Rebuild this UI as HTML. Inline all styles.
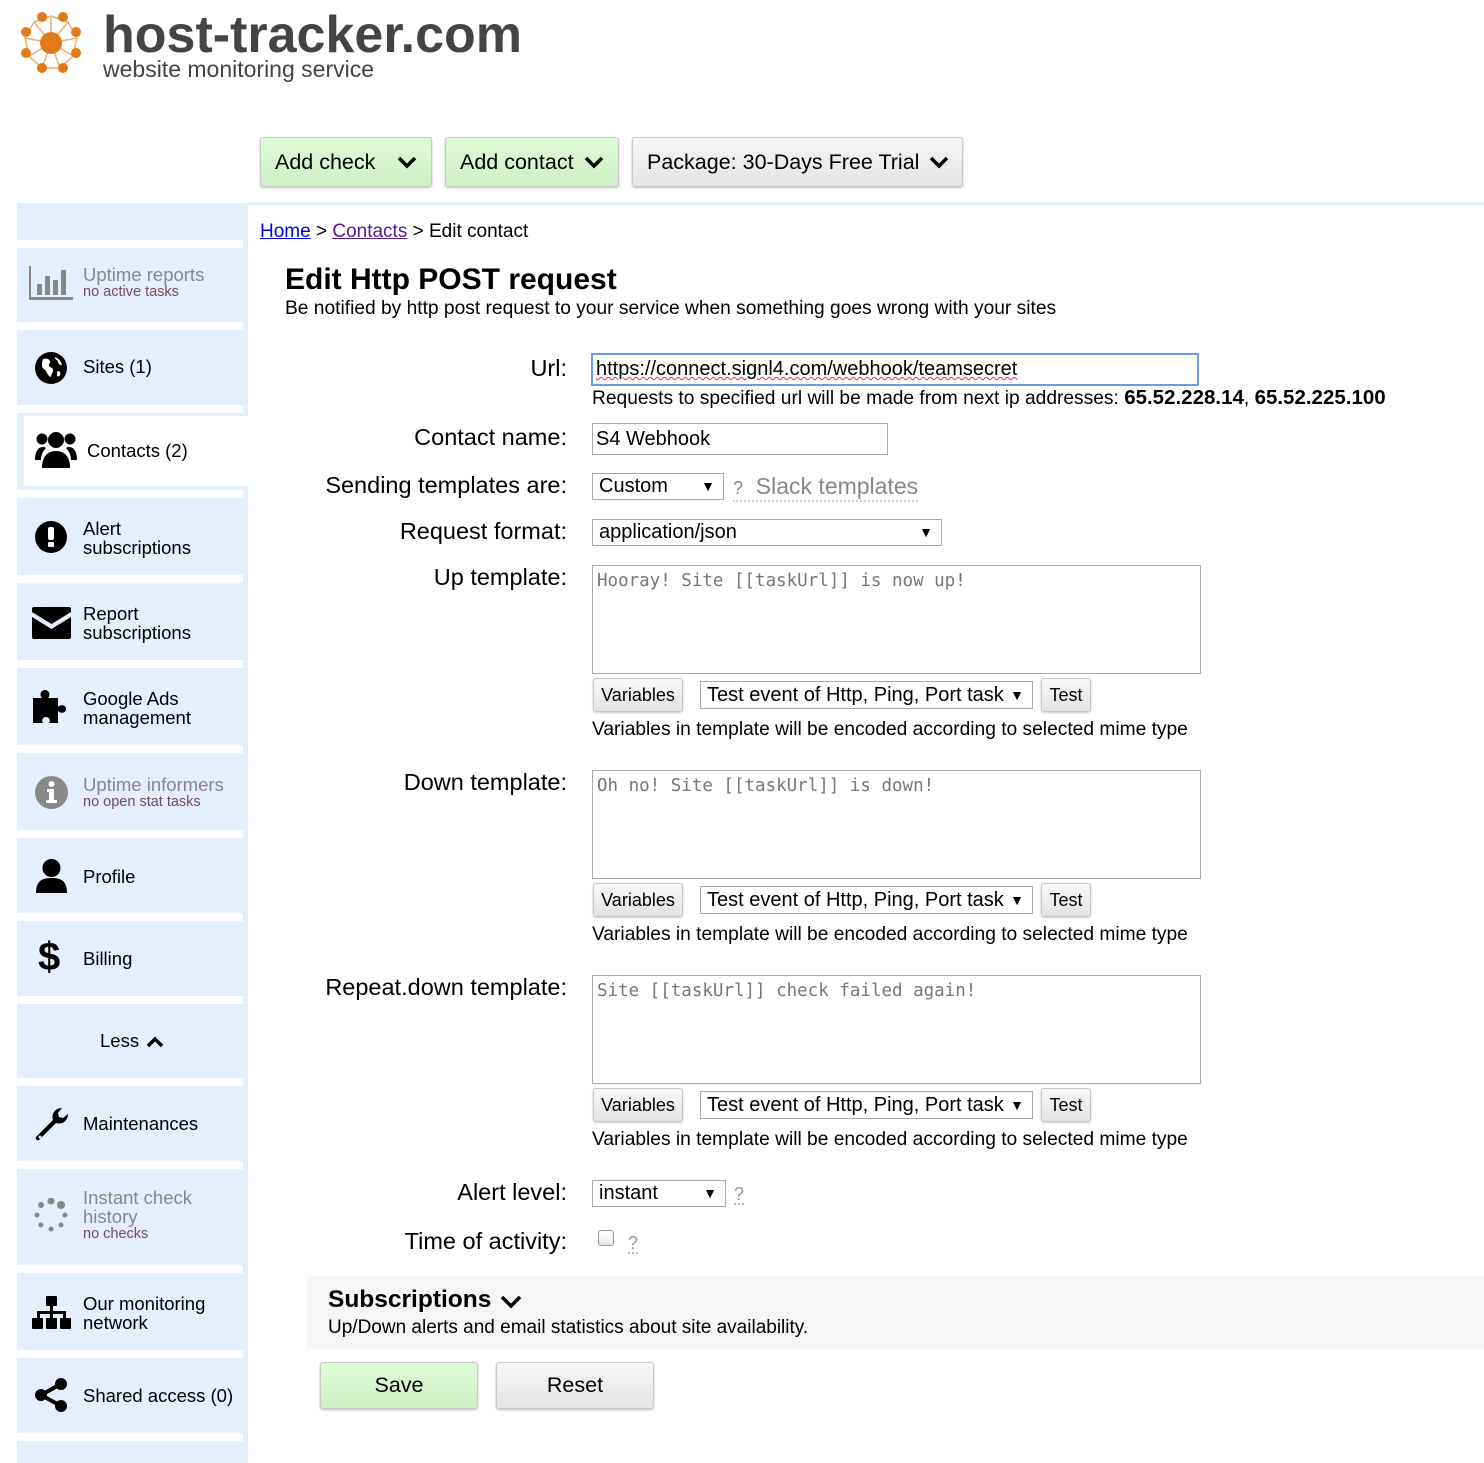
<!DOCTYPE html>
<html><head><meta charset="utf-8">
<style>
*{box-sizing:border-box;margin:0;padding:0}
body{width:1484px;height:1463px;position:relative;background:#fff;font-family:"Liberation Sans",Arial,sans-serif;color:#000;overflow:hidden}
.a{position:absolute}
.side{position:absolute;left:17px;top:203px;width:231px;height:1260px;background:#e4eefd}
.gap{position:absolute;left:17px;width:226px;height:8px;background:#fff}
.it{position:absolute;left:83px;font-size:18.5px;line-height:19px;color:#000}
.ic{position:absolute;left:33px}
.grey{color:#888}
.sub{font-size:14.5px;color:#7a4a5a;line-height:17px}
.btn{position:absolute;height:50px;border:1px solid #c9c9c9;border-radius:3px;font-size:21.5px;line-height:48px;padding-left:14px;box-shadow:0 1px 2px rgba(0,0,0,.25)}
.green{background:linear-gradient(#defbd6,#cfefc6)}
.gray{background:linear-gradient(#f6f6f6,#e4e4e4)}
.lbl{position:absolute;right:917px;font-size:23.5px;text-align:right;white-space:nowrap}
.box{position:absolute;border:1px solid #a9a9a9;background:#fff;font-size:20px;padding-left:6px}
.sel::after{content:"▼";position:absolute;right:8px;top:0;font-size:14px}
.ta{position:absolute;left:592px;width:609px;height:109px;border:1px solid #a9a9a9;font-family:"DejaVu Sans Mono","Liberation Mono",monospace;font-size:17.5px;color:#777;padding:5px 4px}
.sb{position:absolute;height:34px;border:1px solid #c5c5c5;border-radius:3px;background:linear-gradient(#f8f8f8,#e3e3e3);font-size:18px;line-height:32px;text-align:center;box-shadow:0 1px 2px rgba(0,0,0,.2)}
.note{position:absolute;left:592px;font-size:19.2px}
.q{color:#999;font-size:18px;border-bottom:2px dotted #bbb;line-height:18px}
</style></head><body>

<svg class="a" style="left:18px;top:10px" width="66" height="66" viewBox="0 0 66 66">
<g stroke="#e8892a" stroke-width="1.5" fill="none" opacity=".7">
<polygon points="33,6 50,12 59,28 55,46 42,58 24,58 11,46 7,28 16,12"/>
<line x1="33" y1="33" x2="33" y2="6"/><line x1="33" y1="33" x2="59" y2="28"/><line x1="33" y1="33" x2="42" y2="58"/><line x1="33" y1="33" x2="11" y2="46"/><line x1="33" y1="33" x2="16" y2="12"/><line x1="33" y1="33" x2="50" y2="12"/><line x1="33" y1="33" x2="55" y2="46"/><line x1="33" y1="33" x2="24" y2="58"/><line x1="33" y1="33" x2="7" y2="28"/>
</g>
<g fill="#e07a1a"><circle cx="33" cy="33" r="11"/><circle cx="24" cy="7" r="5"/><circle cx="45" cy="7" r="5"/><circle cx="58" cy="22" r="5"/><circle cx="58" cy="43" r="5"/><circle cx="45" cy="58" r="5"/><circle cx="24" cy="58" r="5"/><circle cx="8" cy="43" r="5"/><circle cx="8" cy="22" r="5"/></g>
</svg>
<div class="a" style="left:103px;top:5px;font-size:52px;font-weight:bold;color:#444;letter-spacing:0px;line-height:60px">host-tracker.com</div>
<div class="a" style="left:103px;top:56px;font-size:23px;color:#444">website monitoring service</div>

<div class="btn green" style="left:260px;top:137px;width:172px">Add check</div>
<div class="btn green" style="left:445px;top:137px;width:174px">Add contact</div>
<div class="btn gray" style="left:632px;top:137px;width:331px">Package: 30-Days Free Trial</div>
<svg class="a" style="left:397px;top:155px" width="20" height="14"><path d="M2 3l8 8 8-8" stroke="#000" stroke-width="3.5" fill="none"/></svg>
<svg class="a" style="left:584px;top:155px" width="20" height="14"><path d="M2 3l8 8 8-8" stroke="#000" stroke-width="3.5" fill="none"/></svg>
<svg class="a" style="left:929px;top:155px" width="20" height="14"><path d="M2 3l8 8 8-8" stroke="#000" stroke-width="3.5" fill="none"/></svg>

<div class="a" style="left:247px;top:202px;width:1237px;height:3px;background:#e4eefd"></div>

<div class="side"></div>
<div class="gap" style="top:240px"></div>
<div class="gap" style="top:322px"></div>
<div class="gap" style="top:405px"></div>
<div class="a" style="left:24px;top:416px;width:226px;height:70px;background:#fff"></div>
<div class="gap" style="top:490px"></div>
<div class="gap" style="top:575px"></div>
<div class="gap" style="top:660px"></div>
<div class="gap" style="top:745px"></div>
<div class="gap" style="top:830px"></div>
<div class="gap" style="top:913px"></div>
<div class="gap" style="top:996px"></div>
<div class="gap" style="top:1078px"></div>
<div class="gap" style="top:1161px"></div>
<div class="gap" style="top:1265px"></div>
<div class="gap" style="top:1350px"></div>
<div class="gap" style="top:1433px"></div>

<svg class="ic" style="left:29px;top:266px" width="44" height="34"><g fill="#888"><rect x="0" y="0" width="2" height="33"/><rect x="0" y="31" width="44" height="3"/><rect x="8" y="18" width="5" height="11"/><rect x="16" y="10" width="5" height="19"/><rect x="24" y="14" width="5" height="15"/><rect x="32" y="4" width="5" height="25"/></g></svg>
<div class="it grey" style="top:265px">Uptime reports<div class="sub">no active tasks</div></div>

<svg class="ic" style="left:34px;top:351px" width="34" height="34" viewBox="0 0 34 34"><circle cx="17" cy="17" r="16" fill="#000"/><path d="M9 8c3-1 6 0 7 2s-2 3-1 5 4 1 4 4-2 4-2 7c-3-1-4-4-5-6s-4-2-4-5 0-4 1-7zM21 6c3 1 6 4 7 8-2 0-4-1-4-3s-3-2-3-5zM24 20c2 0 3 2 2 4-1 2-3 2-3 0s0-4 1-4z" fill="#fff"/></svg>
<div class="it" style="top:357px">Sites (1)</div>

<svg class="ic" style="left:35px;top:430px" width="42" height="40" viewBox="0 0 42 40"><g fill="#000"><circle cx="21" cy="10" r="8"/><circle cx="7" cy="9" r="5.5"/><circle cx="35" cy="9" r="5.5"/><path d="M7 38c0-11 5-17 14-17s14 6 14 17z"/><path d="M0 30c0-8 3-13 8-13 2 0 3 1 3 1-3 3-5 7-5 12z"/><path d="M42 30c0-8-3-13-8-13-2 0-3 1-3 1 3 3 5 7 5 12z"/></g></svg>
<div class="it" style="top:441px;left:87px">Contacts (2)</div>

<svg class="ic" style="left:35px;top:521px" width="32" height="32"><circle cx="16" cy="16" r="16" fill="#000"/><rect x="13" y="6" width="6" height="13" rx="2" fill="#fff"/><rect x="13" y="21" width="6" height="5" rx="1" fill="#fff"/></svg>
<div class="it" style="top:519px">Alert<br>subscriptions</div>

<svg class="ic" style="left:32px;top:607px" width="39" height="32"><path d="M2 0h35a2 2 0 0 1 2 2v3L19.5 17 0 5V2a2 2 0 0 1 2-2zM0 10l19.5 12L39 10v20a2 2 0 0 1-2 2H2a2 2 0 0 1-2-2z" fill="#000"/></svg>
<div class="it" style="top:604px">Report<br>subscriptions</div>

<svg class="ic" style="left:33px;top:688px" width="37" height="36" viewBox="0 0 37 36"><path d="M0 10h9c-3-3-1-8 3-8s6 5 3 8h10v9c3-3 8-2 8 2s-5 5-8 2v12h-9c2-3 0-6-3-6s-5 3-3 6H0z" fill="#000"/></svg>
<div class="it" style="top:689px">Google Ads<br>management</div>

<svg class="ic" style="left:35px;top:776px" width="33" height="33"><circle cx="16.5" cy="16.5" r="16.5" fill="#888"/><circle cx="16.5" cy="8" r="3" fill="#fff"/><path d="M12 13h7v11h3v3H11v-3h3v-8h-2z" fill="#fff"/></svg>
<div class="it grey" style="top:775px">Uptime informers<div class="sub">no open stat tasks</div></div>

<svg class="ic" style="left:36px;top:859px" width="31" height="34"><circle cx="15.5" cy="9" r="9" fill="#000"/><path d="M0 34c0-12 6-15 15.5-15S31 22 31 34z" fill="#000"/></svg>
<div class="it" style="top:867px">Profile</div>

<div class="a" style="left:38px;top:934px;font-size:40px;font-weight:bold;line-height:46px">$</div>
<div class="it" style="top:949px">Billing</div>

<div class="it" style="top:1031px;left:100px">Less</div>
<svg class="a" style="left:146px;top:1035px" width="18" height="14"><path d="M2 11l7-7 7 7" stroke="#000" stroke-width="3.5" fill="none"/></svg>

<svg class="ic" style="left:33px;top:1106px" width="38" height="38" viewBox="0 0 38 38"><path d="M3 31L20 14c-2-6 2-12 9-12l-4 5 1 4 4 1 5-4c0 7-6 11-12 9L6 34c-2 1-4-1-3-3z" fill="#000"/><circle cx="7" cy="31" r="1.5" fill="#e4eefd"/></svg>
<div class="it" style="top:1114px">Maintenances</div>

<svg class="ic" style="left:33px;top:1198px" width="36" height="36"><g fill="#888"><circle cx="18" cy="3" r="3.5"/><circle cx="28" cy="7" r="4"/><circle cx="8" cy="7" r="3"/><circle cx="4" cy="17" r="2.5"/><circle cx="32" cy="17" r="2.5"/><circle cx="8" cy="27" r="2.5"/><circle cx="28" cy="27" r="2.5"/><circle cx="18" cy="31" r="2.5"/></g></svg>
<div class="it grey" style="top:1188px">Instant check<br>history<div class="sub">no checks</div></div>

<svg class="ic" style="left:32px;top:1296px" width="39" height="34" viewBox="0 0 39 34"><g fill="#000"><rect x="14" y="0" width="11" height="10" rx="1"/><rect x="18" y="9" width="3" height="8"/><rect x="5" y="15" width="29" height="3"/><rect x="5" y="15" width="3" height="8"/><rect x="31" y="15" width="3" height="8"/><rect x="18" y="15" width="3" height="8"/><rect x="0" y="22" width="11" height="11" rx="1"/><rect x="14" y="22" width="11" height="11" rx="1"/><rect x="28" y="22" width="11" height="11" rx="1"/></g></svg>
<div class="it" style="top:1294px">Our monitoring<br>network</div>

<svg class="ic" style="left:34px;top:1378px" width="34" height="34"><g fill="#000"><circle cx="27" cy="6" r="6"/><circle cx="7" cy="17" r="6"/><circle cx="27" cy="28" r="6"/></g><path d="M27 6L7 17l20 11" stroke="#000" stroke-width="4" fill="none"/></svg>
<div class="it" style="top:1386px">Shared access (0)</div>

<div class="a" style="left:260px;top:221px;font-size:19px"><span style="color:#00e;text-decoration:underline">Home</span> &gt; <span style="color:#551a8b;text-decoration:underline">Contacts</span> &gt; Edit contact</div>

<div class="a" style="left:285px;top:263px;font-size:30px;font-weight:bold">Edit Http POST request</div>
<div class="a" style="left:285px;top:298px;font-size:19.2px">Be notified by http post request to your service when something goes wrong with your sites</div>

<div class="lbl" style="top:355px">Url:</div>
<div class="box" style="left:591px;top:353px;width:608px;height:33px;border:2px solid #6b9ae8;font-size:20px;line-height:29px;padding-left:3px"><span style="text-decoration:underline wavy #e33;text-decoration-thickness:1px">https://connect.signl4.com/webhook/teamsecret</span></div>
<div class="note" style="top:386px">Requests to specified url will be made from next ip addresses: <b style="font-size:20.5px">65.52.228.14</b>, <b style="font-size:20.5px">65.52.225.100</b></div>

<div class="lbl" style="top:424px">Contact name:</div>
<div class="box" style="left:592px;top:423px;width:296px;height:32px;line-height:30px;padding-left:3px">S4 Webhook</div>

<div class="lbl" style="top:472px">Sending templates are:</div>
<div class="box sel" style="left:592px;top:473px;width:132px;height:27px;line-height:25px">Custom</div>
<div class="a" style="left:733px;top:474px;font-size:23px;color:#888;border-bottom:2px dotted #ccc;line-height:24px"><span style="font-size:18px">?</span>&nbsp; Slack templates</div>

<div class="lbl" style="top:518px">Request format:</div>
<div class="box sel" style="left:592px;top:519px;width:350px;height:27px;line-height:25px">application/json</div>

<div class="lbl" style="top:564px">Up template:</div>
<div class="ta" style="top:565px">Hooray! Site [[taskUrl]] is now up!</div>
<div class="sb" style="left:593px;top:678px;width:90px">Variables</div>
<div class="box sel" style="left:700px;top:681px;width:333px;height:28px;line-height:26px">Test event of Http, Ping, Port task</div>
<div class="sb" style="left:1041px;top:678px;width:50px">Test</div>
<div class="note" style="top:719px">Variables in template will be encoded according to selected mime type</div>

<div class="lbl" style="top:769px">Down template:</div>
<div class="ta" style="top:770px">Oh no! Site [[taskUrl]] is down!</div>
<div class="sb" style="left:593px;top:883px;width:90px">Variables</div>
<div class="box sel" style="left:700px;top:886px;width:333px;height:28px;line-height:26px">Test event of Http, Ping, Port task</div>
<div class="sb" style="left:1041px;top:883px;width:50px">Test</div>
<div class="note" style="top:924px">Variables in template will be encoded according to selected mime type</div>

<div class="lbl" style="top:974px">Repeat.down template:</div>
<div class="ta" style="top:975px">Site [[taskUrl]] check failed again!</div>
<div class="sb" style="left:593px;top:1088px;width:90px">Variables</div>
<div class="box sel" style="left:700px;top:1091px;width:333px;height:28px;line-height:26px">Test event of Http, Ping, Port task</div>
<div class="sb" style="left:1041px;top:1088px;width:50px">Test</div>
<div class="note" style="top:1129px">Variables in template will be encoded according to selected mime type</div>

<div class="lbl" style="top:1179px">Alert level:</div>
<div class="box sel" style="left:592px;top:1180px;width:134px;height:27px;line-height:25px">instant</div>
<div class="a q" style="left:734px;top:1185px">?</div>

<div class="lbl" style="top:1228px">Time of activity:</div>
<div class="a" style="left:598px;top:1230px;width:16px;height:16px;border:1px solid #999;border-radius:3px;background:linear-gradient(#fff,#e6e6e6)"></div>
<div class="a q" style="left:628px;top:1234px">?</div>

<div class="a" style="left:307px;top:1276px;width:1177px;height:73px;background:#f6f6f6"></div>
<div class="a" style="left:328px;top:1286px;font-size:24.5px;font-weight:bold">Subscriptions</div>
<svg class="a" style="left:500px;top:1294px" width="22" height="16"><path d="M2 3l9 9 9-9" stroke="#000" stroke-width="3.5" fill="none"/></svg>
<div class="a" style="left:328px;top:1317px;font-size:19px">Up/Down alerts and email statistics about site availability.</div>

<div class="btn green" style="left:320px;top:1362px;width:158px;height:47px;line-height:45px;padding:0;text-align:center">Save</div>
<div class="btn gray" style="left:496px;top:1362px;width:158px;height:47px;line-height:45px;padding:0;text-align:center">Reset</div>

</body></html>
